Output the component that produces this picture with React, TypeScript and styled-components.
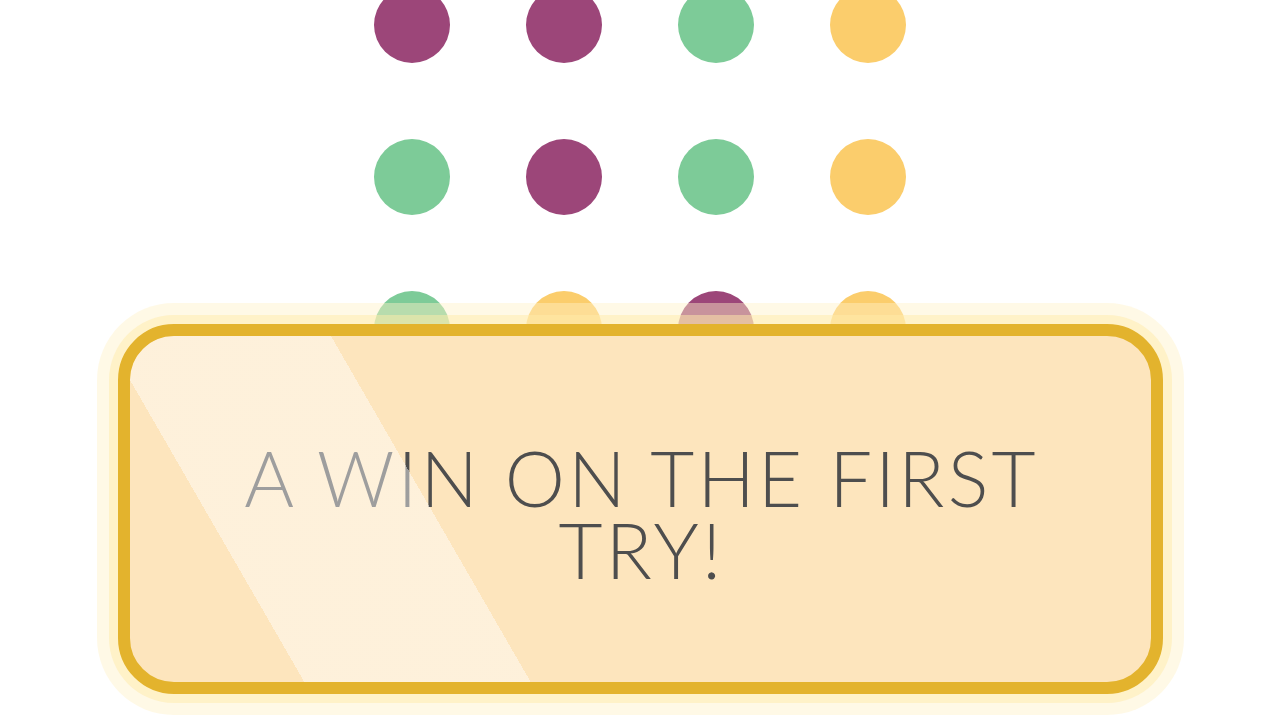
import React from "react";
import styled, { createGlobalStyle } from "styled-components";

const Global = createGlobalStyle`
  html, body { margin: 0; padding: 0; background: #ffffff; }
  body { width: 1280px; height: 720px; overflow: hidden; font-family: "Lato", "Inter", sans-serif; }
  #root { width: 1280px; height: 720px; }
`;

const Page = styled.main`
  width: 1280px;
  height: 720px;
  display: flex;
  flex-direction: column;
  align-items: center;
  overflow: hidden;
`;

const DotGrid = styled.div`
  display: grid;
  grid-template-columns: repeat(4, 76px);
  grid-auto-rows: 76px;
  column-gap: 76px;
  row-gap: 76px;
  margin-top: -13px;
`;

const Dot = styled.span<{ $color: string }>`
  width: 76px;
  height: 76px;
  border-radius: 50%;
  background: ${(p) => p.$color};
`;

const Card = styled.section`
  position: relative;
  z-index: 1;
  box-sizing: border-box;
  width: 1045px;
  height: 370px;
  margin-top: -43px;
  border: 12px solid #e3b32d;
  border-radius: 56px;
  background: #fde5bd;
  box-shadow:
    0 0 0 9px rgba(255, 236, 170, 0.5),
    0 0 0 21px rgba(255, 242, 200, 0.45);
  display: flex;
  align-items: center;
  justify-content: center;
  overflow: hidden;
`;

const Shine = styled.div`
  position: absolute;
  inset: 0;
  border-radius: 44px;
  background: linear-gradient(
    60deg,
    transparent 151px,
    rgba(255, 255, 255, 0.45) 151px,
    rgba(255, 255, 255, 0.45) 347px,
    transparent 347px
  );
  pointer-events: none;
`;

const Message = styled.h1`
  margin: 10px 0 0 3px;
  max-width: 880px;
  font-family: "Lato", "Inter", sans-serif;
  font-weight: 300;
  font-size: 76px;
  line-height: 72px;
  letter-spacing: 3.2px;
  color: #4e4e4e;
  text-align: center;
  text-transform: uppercase;
`;

const P = "#9c4679";
const G = "#7dcb98";
const Y = "#fbcd6c";

const dots = [P, P, G, Y, G, P, G, Y, G, Y, P, Y];

export default function App() {
  return (
    <Page>
      <Global />
      <DotGrid>
        {dots.map((c, i) => (
          <Dot key={i} $color={c} />
        ))}
      </DotGrid>
      <Card>
        <Message>A win on the first try!</Message>
        <Shine />
      </Card>
    </Page>
  );
}
